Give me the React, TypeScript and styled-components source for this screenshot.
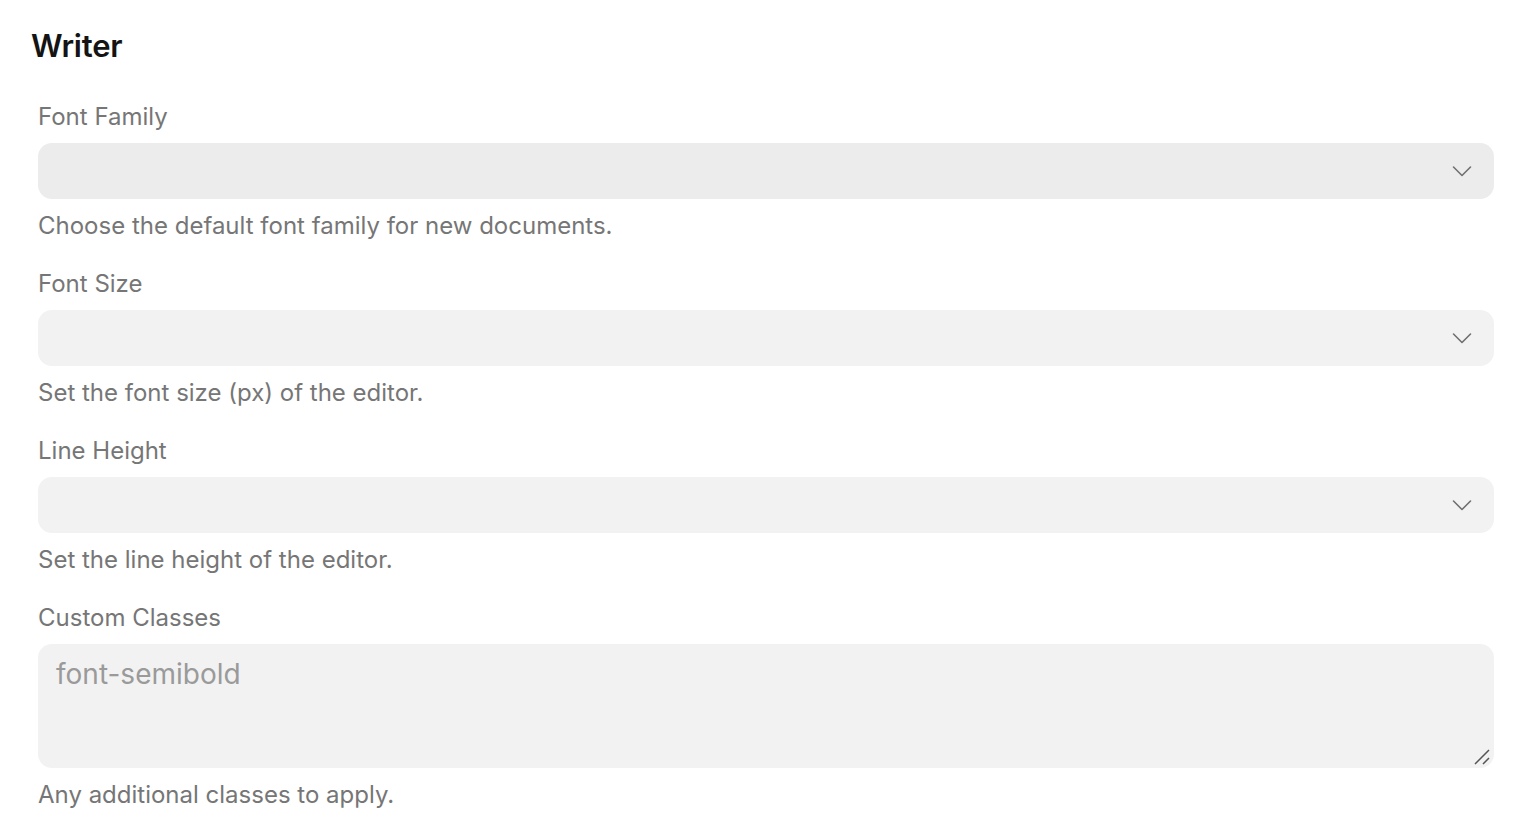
import React from "react";
import styled, { createGlobalStyle } from "styled-components";

const Global = createGlobalStyle`
  html, body { margin: 0; padding: 0; background: #ffffff; }
  body { font-family: Inter, "Noto Sans", sans-serif; -webkit-font-smoothing: antialiased; }
`;

const Page = styled.div`
  padding: 26px 34px 20px 31px;
`;

const Title = styled.h2`
  margin: 0 0 36px 0;
  font-size: 31px;
  line-height: 40px;
  font-weight: 600;
  color: #141414;
  letter-spacing: -0.2px;
`;

const Fields = styled.div`
  display: flex;
  flex-direction: column;
  gap: 28px;
  padding-left: 7px;
`;

const Field = styled.div`
  display: flex;
  flex-direction: column;
  gap: 11px;
`;

const Label = styled.label`
  font-size: 24px;
  line-height: 30px;
  color: #767676;
`;

const Description = styled.p`
  margin: 1px 0 0 0;
  font-size: 24px;
  line-height: 30px;
  color: #767676;
`;

const SelectBox = styled.div<{ $active?: boolean }>`
  height: 56px;
  border-radius: 14px;
  background: ${(p) => (p.$active ? "#ececec" : "#f2f2f2")};
  display: flex;
  align-items: center;
  justify-content: flex-end;
  padding: 0 22px;
  box-sizing: border-box;
`;

const Chevron = styled.svg`
  width: 20px;
  height: 20px;
  color: #707070;
`;

const TextArea = styled.div`
  position: relative;
  height: 124px;
  border-radius: 14px;
  background: #f2f2f2;
  padding: 12px 18px;
  box-sizing: border-box;
  font-size: 28px;
  line-height: 36px;
  color: #9a9a9a;
`;

const Grip = styled.svg`
  position: absolute;
  right: 3px;
  bottom: 2px;
  width: 18px;
  height: 18px;
  color: #555;
`;

function Select({ active }: { active?: boolean }) {
  return (
    <SelectBox $active={active}>
      <Chevron viewBox="0 0 20 20" fill="none">
        <path d="M1.5 6l8.5 8.5 8.5-8.5" stroke="currentColor" strokeWidth="1.6" strokeLinecap="round" strokeLinejoin="round" />
      </Chevron>
    </SelectBox>
  );
}

export default function App() {
  return (
    <>
      <Global />
      <Page>
        <Title>Writer</Title>
        <Fields>
          <Field>
            <Label>Font Family</Label>
            <Select active />
            <Description>Choose the default font family for new documents.</Description>
          </Field>
          <Field>
            <Label>Font Size</Label>
            <Select />
            <Description>Set the font size (px) of the editor.</Description>
          </Field>
          <Field>
            <Label>Line Height</Label>
            <Select />
            <Description>Set the line height of the editor.</Description>
          </Field>
          <Field>
            <Label>Custom Classes</Label>
            <TextArea>
              font-semibold
              <Grip viewBox="0 0 18 18" fill="none">
                <path d="M2 16L16 2M10 16l6-6" stroke="currentColor" strokeWidth="1.5" />
              </Grip>
            </TextArea>
            <Description>Any additional classes to apply.</Description>
          </Field>
        </Fields>
      </Page>
    </>
  );
}
